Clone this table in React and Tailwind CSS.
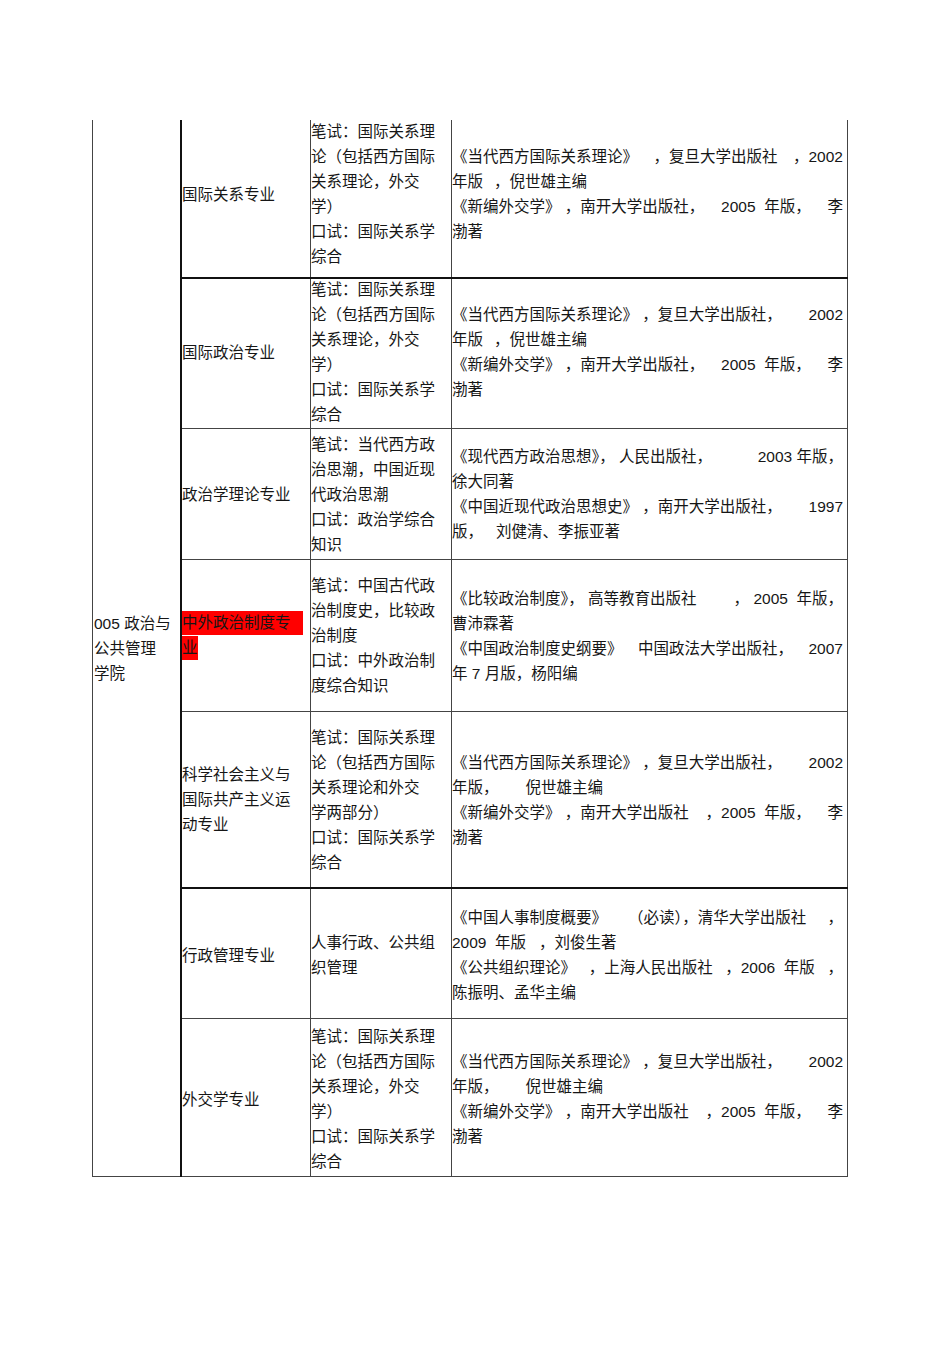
import React from "react";

const FONT = { fontFamily: "'Liberation Sans', 'Noto Sans CJK SC', sans-serif" };

const IR_C3 = ["笔试：国际关系理", "论（包括西方国际", "关系理论，外交", "学）", "口试：国际关系学", "综合"];

const rows = [
  {
    h: "h-[159px]", b: "border-b-2 border-[#111]", pad: "pb-[9px]",
    c2: ["国际关系专业"],
    c3: IR_C3,
    c4: [
      ["《当代西方国际关系理论》", "，复旦大学出版社", "，2002"],
      { a: "年版", b: "，倪世雄主编", gap: "ml-[11px]" },
      ["《新编外交学》 ，南开大学出版社，", "2005  年版，", "李"],
      "渤著",
    ],
  },
  {
    h: "h-[150px]", b: "border-b border-[#444]", pad: "pb-[3px]",
    c2: ["国际政治专业"],
    c3: IR_C3,
    c4: [
      ["《当代西方国际关系理论》 ，复旦大学出版社，", "2002"],
      { a: "年版", b: "，倪世雄主编", gap: "ml-[11px]" },
      ["《新编外交学》 ，南开大学出版社，", "2005  年版，", "李"],
      "渤著",
    ],
  },
  {
    h: "h-[131px]", b: "border-b border-[#444]", pad: "",
    c2: ["政治学理论专业"],
    c3: ["笔试：当代西方政", "治思潮，中国近现", "代政治思潮", "口试：政治学综合", "知识"],
    c4: [
      ["《现代西方政治思想》， 人民出版社，", "2003 年版，"],
      "徐大同著",
      ["《中国近现代政治思想史》 ，南开大学出版社，", "1997"],
      { a: "版，", b: "刘健清、李振亚著", gap: "ml-[13px]" },
    ],
  },
  {
    h: "h-[152px]", b: "border-b border-[#444]", pad: "",
    red: true,
    c2: ["中外政治制度专", "业"],
    c3: ["笔试：中国古代政", "治制度史，比较政", "治制度", "口试：中外政治制", "度综合知识"],
    c4: [
      ["《比较政治制度》， 高等教育出版社", "， 2005  年版，"],
      "曹沛霖著",
      ["《中国政治制度史纲要》", "中国政法大学出版社，", "2007"],
      "年 7 月版，杨阳编",
    ],
  },
  {
    h: "h-[177px]", b: "border-b-2 border-[#111]", pad: "",
    c2: ["科学社会主义与", "国际共产主义运", "动专业"],
    c3: ["笔试：国际关系理", "论（包括西方国际", "关系理论和外交", "学两部分）", "口试：国际关系学", "综合"],
    c4: [
      ["《当代西方国际关系理论》 ，复旦大学出版社，", "2002"],
      { a: "年版，", b: "倪世雄主编", gap: "ml-[27px]" },
      ["《新编外交学》 ，南开大学出版社", "，2005  年版，", "李"],
      "渤著",
    ],
  },
  {
    h: "h-[130px]", b: "border-b border-[#444]", pad: "pt-[3px]",
    c2: ["行政管理专业"],
    c3: ["人事行政、公共组", "织管理"],
    c4: [
      ["《中国人事制度概要》", "（必读），清华大学出版社", "，"],
      { a: "2009  年版", b: "，刘俊生著", gap: "ml-[13px]" },
      ["《公共组织理论》", "，上海人民出版社", "，2006  年版", "，"],
      "陈振明、孟华主编",
    ],
  },
  {
    h: "h-[158px]", b: "border-b border-[#444]", pad: "pt-[3px]",
    c2: ["外交学专业"],
    c3: IR_C3,
    c4: [
      ["《当代西方国际关系理论》 ，复旦大学出版社，", "2002"],
      { a: "年版，", b: "倪世雄主编", gap: "ml-[27px]" },
      ["《新编外交学》 ，南开大学出版社", "，2005  年版，", "李"],
      "渤著",
    ],
  },
];

function Line4({ line }) {
  if (Array.isArray(line)) {
    return (
      <div className="flex justify-between whitespace-pre h-[25px]">
        {line.map((s, i) => (
          <span key={i}>{s}</span>
        ))}
      </div>
    );
  }
  if (typeof line === "object") {
    return (
      <div className="flex whitespace-pre h-[25px]">
        <span>{line.a}</span>
        <span className={line.gap}>{line.b}</span>
      </div>
    );
  }
  return <div className="whitespace-pre h-[25px]">{line}</div>;
}

function Row({ r }) {
  return (
    <div className={`flex ${r.h} ${r.b}`}>
      <div className={`w-[129px] shrink-0 border-r border-[#444] flex flex-col justify-center ${r.pad}`}>
        {r.c2.map((t, i) =>
          r.red ? (
            <div key={i} className="h-[25px] flex items-center">
              <span className={`bg-[#ff0000] h-[24px] leading-[24px] inline-block ${i === 0 ? "w-[121px]" : "w-[16px]"}`}>{t}</span>
            </div>
          ) : (
            <div key={i} className="h-[25px] whitespace-nowrap">{t}</div>
          )
        )}
      </div>
      <div className={`w-[141px] shrink-0 border-r border-[#444] flex flex-col justify-center ${r.pad}`}>
        {r.c3.map((t, i) => (
          <div key={i} className="h-[25px] whitespace-nowrap">{t}</div>
        ))}
      </div>
      <div className={`w-[396px] shrink-0 border-r border-[#444] flex flex-col justify-center pr-[4px] ${r.pad}`}>
        {r.c4.map((l, i) => (
          <Line4 key={i} line={l} />
        ))}
      </div>
    </div>
  );
}

export default function App() {
  return (
    <div className="w-[950px] h-[1345px] bg-white text-[#161616] text-[15.5px] leading-[25px]" style={FONT}>
      <div className="pt-[120px] pl-[92px]">
        <div className="flex w-[756px]">
          <div className="w-[88px] shrink-0 border-l border-b border-[#444] flex flex-col justify-center pl-[1px]">
            <div className="h-[25px] whitespace-nowrap">005 政治与</div>
            <div className="h-[25px] whitespace-nowrap">公共管理</div>
            <div className="h-[25px] whitespace-nowrap">学院</div>
          </div>
          <div className="border-l-2 border-[#111] flex flex-col">
            {rows.map((r, i) => (
              <Row key={i} r={r} />
            ))}
          </div>
        </div>
      </div>
    </div>
  );
}
